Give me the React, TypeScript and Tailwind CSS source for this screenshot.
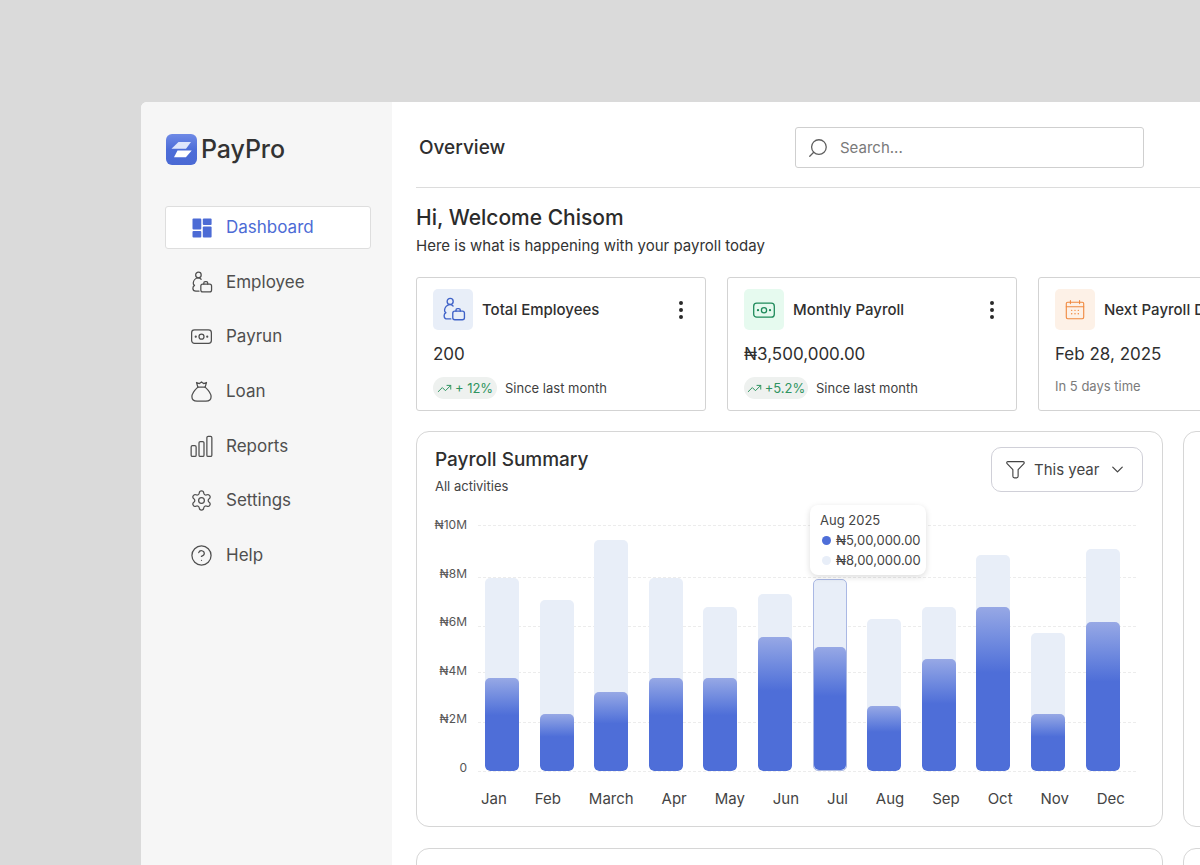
import { ChevronDown, CircleHelp, EllipsisVertical, Search, Settings, TrendingUp } from "lucide-react";

type IconProps = { className?: string };

const Logo = () => (
  <svg viewBox="0 0 31 31" className="h-[31px] w-[31px] shrink-0">
    <defs>
      <linearGradient id="logoBg" x1="0" y1="0" x2="0" y2="1">
        <stop offset="0" stopColor="#6f8ae6" />
        <stop offset="0.5" stopColor="#4d6dd8" />
        <stop offset="1" stopColor="#4a69d4" />
      </linearGradient>
    </defs>
    <rect width="31" height="31" rx="6" fill="url(#logoBg)" />
    <path d="M12.5 8h12.5l-5 6.8H5.5z" fill="#dfe6fb" />
    <path d="M11.5 16.6h14.2l-5.8 6.6H8z" fill="#ffffff" />
  </svg>
);

const DashIcon = ({ className }: IconProps) => (
  <svg viewBox="0 0 20 20" className={className} fill="#4c6bd5">
    <rect x="0.5" y="0.5" width="8.8" height="11" rx="1" />
    <rect x="10.8" y="0.5" width="8.8" height="6.6" rx="1" />
    <rect x="0.5" y="13" width="8.8" height="6.6" rx="1" />
    <rect x="10.8" y="8.6" width="8.8" height="11" rx="1" />
  </svg>
);

const PersonCase = ({ className }: IconProps) => (
  <svg viewBox="0 0 24 24" className={className} fill="none" stroke="currentColor" strokeWidth="1.3" strokeLinecap="round" strokeLinejoin="round">
    <circle cx="8.8" cy="4.2" r="2.9" />
    <path d="M11.6 8.6C10.6 7.6 9.7 7.3 8.6 7.3 5.6 7.3 3.6 10 3.4 12.6c-.1 1.1.3 1.9 1.3 2.4-.9.6-1.7 1.5-1.7 2.9 0 2 1.5 3.1 3.2 3.1h3.2" />
    <rect x="11.3" y="13.6" width="11.2" height="8.2" rx="2" />
    <path d="M14.4 13.6v-1.1c0-.9.6-1.4 1.4-1.4h1.2c.9 0 1.5.5 1.5 1.4v1.1" />
  </svg>
);

const Money = ({ className }: IconProps) => (
  <svg viewBox="0 0 24 24" className={className} fill="none" stroke="currentColor" strokeWidth="1.3" strokeLinecap="round">
    <rect x="1.7" y="5.2" width="20.6" height="14" rx="3" />
    <circle cx="12" cy="12.2" r="2.6" />
    <circle cx="6" cy="12.2" r="0.5" fill="currentColor" />
    <circle cx="18" cy="12.2" r="0.5" fill="currentColor" />
  </svg>
);

const Bag = ({ className }: IconProps) => (
  <svg viewBox="0 0 24 24" className={className} fill="none" stroke="currentColor" strokeWidth="1.3" strokeLinecap="round" strokeLinejoin="round">
    <path d="M8.2 7.4 6.8 2.6l3 1.1L12 2l2.2 1.7 3-1.1-1.4 4.8" />
    <path d="M8.2 7.4h7.6" />
    <path d="M8.2 7.4C5.4 10 2 13.8 2 17.4 2 20.6 4.6 22 7.4 22h9.2c2.8 0 5.4-1.4 5.4-4.6 0-3.6-3.4-7.4-6.2-10" />
  </svg>
);

const Bars = ({ className }: IconProps) => (
  <svg viewBox="0 0 24 24" className={className} fill="none" stroke="currentColor" strokeWidth="1.3">
    <rect x="1.2" y="11.2" width="5.2" height="11.2" rx="1.4" />
    <rect x="9.4" y="6.8" width="5.2" height="15.6" rx="1.4" />
    <rect x="17.6" y="1.4" width="5.2" height="21" rx="1.4" />
  </svg>
);

const Calendar = ({ className }: IconProps) => (
  <svg viewBox="0 0 24 24" className={className} fill="none" stroke="currentColor" strokeWidth="1.2" strokeLinecap="round">
    <rect x="2.5" y="3.5" width="19" height="18" rx="1.5" />
    <path d="M2.5 8.5h19M7 1.8v3.2M17 1.8v3.2" />
    <path d="M8.4 12.4h.01M12 12.4h.01M15.6 12.4h.01M8.4 16.2h.01M12 16.2h.01M15.6 16.2h.01" strokeWidth="1.6" />
  </svg>
);

const Funnel = ({ className }: IconProps) => (
  <svg viewBox="0 0 24 24" className={className} fill="none" stroke="currentColor" strokeWidth="1.3" strokeLinejoin="round">
    <path d="M2 4.2c0-.7.5-1.2 1.2-1.2h17.6c.7 0 1.2.5 1.2 1.2 0 .4-.1.7-.4 1l-6.6 6.9v7.6c0 1-.8 1.8-1.8 1.8h-2.4c-1 0-1.8-.8-1.8-1.8v-7.6L2.4 5.200C2.100 4.900 2 4.600 2 4.200z" />
  </svg>
);

const nav = [
  { label: "Employee", Icon: PersonCase },
  { label: "Payrun", Icon: Money },
  { label: "Loan", Icon: Bag },
  { label: "Reports", Icon: Bars },
  { label: "Settings", Icon: Settings },
  { label: "Help", Icon: CircleHelp },
];

const Sidebar = () => (
  <aside className="flex w-[251px] shrink-0 flex-col rounded-tl-[6px] bg-[#f6f6f6] pl-[24px] pt-[32px]">
    <div className="flex h-[31px] items-center gap-[4px] pl-[1px]">
      <Logo />
      <span className="text-[25px] font-medium leading-none tracking-[-0.1px] text-[#333333]">PayPro</span>
    </div>
    <div className="mt-[41px] flex h-[43px] w-[206px] items-center gap-[14px] rounded-[3px] border border-[#dedede] bg-white pl-[26px]">
      <DashIcon className="h-[20px] w-[20px]" />
      <span className="text-[17px] leading-none text-[#4c6bd5]">Dashboard</span>
    </div>
    <div className="mt-[6px] flex flex-col">
      {nav.map(({ label, Icon }) => (
        <div key={label} className="flex h-[54.6px] items-center gap-[13px] pl-[25px] text-[#4f4f4f]">
          <Icon className="h-[23px] w-[23px] shrink-0" strokeWidth={1.3} />
          <span className="text-[17px] leading-none">{label}</span>
        </div>
      ))}
    </div>
  </aside>
);

const Pill = ({ text, w }: { text: string; w: string }) => (
  <span className={`flex h-[22px] items-center justify-center gap-[3px] rounded-full bg-[#eef1ef] text-[13px] leading-none text-[#2f9461] ${w}`}>
    <TrendingUp className="h-[15px] w-[15px]" strokeWidth={1.6} />
    {text}
  </span>
);

const StatCard = ({ icon, title, value, pill, pillW, note }: { icon: React.ReactNode; title: string; value: string; pill?: string; pillW?: string; note: string }) => (
  <div className="relative h-[134px] w-[290px] shrink-0 rounded-[3px] border border-[#d3d3d3] bg-white px-[16px] pt-[11px]">
    <div className="flex items-center gap-[9px]">
      {icon}
      <span className="whitespace-nowrap text-[15px] font-medium leading-none text-[#2f2f2f]">{title}</span>
      {pill && <EllipsisVertical className="ml-auto mr-[-4px] h-[24px] w-[24px] text-[#2a2a2a]" strokeWidth={2} />}
    </div>
    <div className="mt-[12px] text-[17px] leading-[24px] text-[#2f2f2f]">{value}</div>
    {pill ? (
      <div className="mt-[11px] flex items-center gap-[8px]">
        <Pill text={pill} w={pillW ?? ""} />
        <span className="text-[13px] leading-none text-[#3f3f3f]">{note}</span>
      </div>
    ) : (
      <div className="mt-[12px] text-[13px] leading-[16px] text-[#7b7b7b]">{note}</div>
    )}
  </div>
);

const data = [
  { m: "Jan", light: 193, dark: 93 },
  { m: "Feb", light: 171, dark: 57 },
  { m: "March", light: 231, dark: 79 },
  { m: "Apr", light: 193, dark: 93 },
  { m: "May", light: 164, dark: 93 },
  { m: "Jun", light: 177, dark: 134 },
  { m: "Jul", light: 192, dark: 124, active: true },
  { m: "Aug", light: 152, dark: 65 },
  { m: "Sep", light: 164, dark: 112 },
  { m: "Oct", light: 216, dark: 164 },
  { m: "Nov", light: 138, dark: 57 },
  { m: "Dec", light: 222, dark: 149 },
];

const gridTops = [0, 52, 101, 147, 197, 246];
const yLabels = ["₦10M", "₦8M", "₦6M", "₦4M", "₦2M", "0"];

const Chart = () => (
  <div className="mt-[23px] flex">
    <div className="flex h-[259px] w-[32px] shrink-0 flex-col items-end justify-between text-[12px] leading-[16px] text-[#555555]">
      {yLabels.map((l) => (
        <span key={l}>{l}</span>
      ))}
    </div>
    <div className="ml-[11px] flex-1">
      <div className="relative mt-[8px] h-[247px] w-[658px]">
        {gridTops.map((t) => (
          <div key={t} className="absolute left-0 right-0 border-t border-dashed border-[#ececec]" style={{ top: t }} />
        ))}
        <div className="absolute inset-0 flex items-end gap-[20.6px] pb-[1px] pl-[7px]">
          {data.map((d) => (
            <div
              key={d.m}
              className={`relative flex w-[34px] shrink-0 items-end overflow-hidden rounded-[5px] bg-[#e8eef8] ${d.active ? "border border-[#aab8e4]" : ""}`}
              style={{ height: d.light }}
            >
              <div
                className="w-full rounded-[5px] bg-linear-to-b from-[#97a8e5] to-[#4e6ed8] to-40%"
                style={{ height: d.active ? d.dark - 1 : d.dark }}
              />
            </div>
          ))}
        </div>
        <div className="absolute left-[332px] top-[-20px] h-[70px] w-[116px] rounded-[8px] bg-white pl-[10px] pt-[5px] text-[13px] leading-[20px] text-[#444444] shadow-[0_2px_6px_rgba(0,0,0,0.14)]">
          <div>Aug 2025</div>
          <div className="flex items-center gap-[5px] pl-[2px]">
            <span className="h-[9px] w-[9px] rounded-full bg-[#4e6ed8]" />
            ₦5,00,000.00
          </div>
          <div className="flex items-center gap-[5px] pl-[2px]">
            <span className="h-[9px] w-[9px] rounded-full bg-[#e8eef8]" />
            ₦8,00,000.00
          </div>
        </div>
      </div>
      <div className="ml-[3px] mt-[17px] flex w-[644px] justify-between text-[15px] leading-[20px] text-[#444444]">
        {data.map((d) => (
          <span key={d.m}>{d.m}</span>
        ))}
      </div>
    </div>
  </div>
);

export default function App() {
  return (
    <div className="h-[865px] w-full overflow-hidden bg-[#dadada] pl-[141px] pt-[102px] font-['Inter',sans-serif]">
      <div className="flex h-[763px] w-[1059px] rounded-tl-[6px] bg-white">
        <Sidebar />
        <main className="min-w-0 flex-1 overflow-hidden pl-[24px]">
          <header className="flex h-[86px] items-start border-b border-[#dcdcdc] pt-[25px]">
            <div className="flex h-[41px] w-[379px] shrink-0 items-center pl-[3px] text-[19px] font-medium leading-none text-[#2f2f2f]">Overview</div>
            <div className="flex h-[41px] w-[349px] shrink-0 items-center gap-[11px] rounded-[3px] border border-[#cfcfcf] pl-[11px]">
              <Search className="h-[22px] w-[22px] -scale-x-100 text-[#5f5f5f]" strokeWidth={1.4} />
              <span className="text-[15px] leading-none text-[#7a7a7a]">Search...</span>
            </div>
          </header>
          <h1 className="mt-[16px] text-[21px] font-medium leading-[28px] text-[#2b2b2b]">Hi, Welcome Chisom</h1>
          <p className="mt-[4px] text-[15px] leading-[20px] text-[#333333]">Here is what is happening with your payroll today</p>
          <div className="mt-[21px] flex gap-[21px]">
            <StatCard
              icon={<span className="flex h-[41px] w-[40px] items-center justify-center rounded-[5px] bg-[#e8eef8]"><PersonCase className="h-[25px] w-[25px] text-[#3f62c8]" /></span>}
              title="Total Employees"
              value="200"
              pill="+ 12%"
              pillW="w-[64px]"
              note="Since last month"
            />
            <StatCard
              icon={<span className="flex h-[41px] w-[40px] items-center justify-center rounded-[5px] bg-[#e6faef]"><Money className="h-[24px] w-[24px] text-[#1f8a5b]" /></span>}
              title="Monthly Payroll"
              value="₦3,500,000.00"
              pill="+5.2%"
              pillW="w-[64px]"
              note="Since last month"
            />
            <StatCard
              icon={<span className="flex h-[41px] w-[40px] items-center justify-center rounded-[5px] bg-[#fdf1e7]"><Calendar className="h-[22px] w-[22px] text-[#f0893f]" /></span>}
              title="Next Payroll Date"
              value="Feb 28, 2025"
              note="In 5 days time"
            />
          </div>
          <div className="mt-[20px] grid grid-cols-[747px_400px] grid-rows-[396px_200px] gap-x-[20px] gap-y-[21px]">
            <section className="rounded-[13px] border border-[#d6d6d6] pl-[18px] pr-[19px] pt-[15px]">
              <div className="flex items-start justify-between">
                <div>
                  <h2 className="mt-[1px] text-[19px] font-medium leading-[24px] text-[#2f2f2f]">Payroll Summary</h2>
                  <p className="mt-[6px] text-[13px] leading-[16px] text-[#444444]">All activities</p>
                </div>
                <div className="flex h-[45px] w-[152px] items-center rounded-[10px] border border-[#d0d0d8] pl-[13px] text-[#444444]">
                  <Funnel className="h-[21px] w-[21px]" />
                  <span className="ml-[8px] text-[15px] leading-none">This year</span>
                  <ChevronDown className="ml-auto mr-[15px] h-[19px] w-[19px]" strokeWidth={1.6} />
                </div>
              </div>
              <Chart />
            </section>
            <section className="rounded-[13px] border border-[#d6d6d6]" />
            <section className="rounded-[13px] border border-[#d6d6d6]" />
            <section className="rounded-[13px] border border-[#d6d6d6]" />
          </div>
        </main>
      </div>
    </div>
  );
}
